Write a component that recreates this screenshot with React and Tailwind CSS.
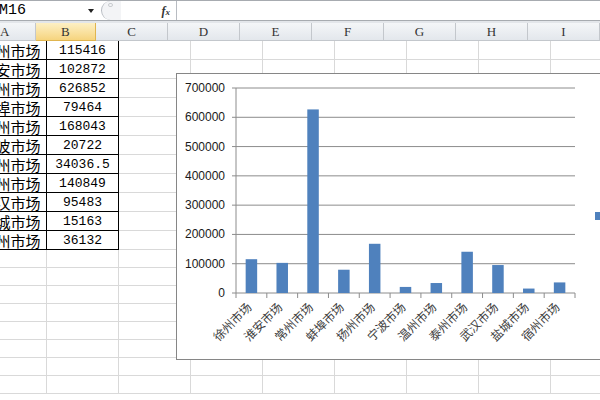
import React from "react";

const data = [
  ["徐州市场", 115416, "115416"],
  ["淮安市场", 102872, "102872"],
  ["常州市场", 626852, "626852"],
  ["蚌埠市场", 79464, "79464"],
  ["扬州市场", 168043, "168043"],
  ["宁波市场", 20722, "20722"],
  ["温州市场", 34036.5, "34036.5"],
  ["泰州市场", 140849, "140849"],
  ["武汉市场", 95483, "95483"],
  ["盐城市场", 15163, "15163"],
  ["宿州市场", 36132, "36132"],
];

const cols = ["C", "D", "E", "F", "G", "H", "I"];

function Chart() {
  const x0 = 59;
  const x1 = 398;
  const y0 = 219;
  const yTop = 14;
  const step = (y0 - yTop) / 7;
  const cw = (x1 - x0) / 11;
  const ticks = [0, 1, 2, 3, 4, 5, 6, 7];
  return (
    <svg width="440" height="285" className="block">
      {ticks.map((t) => {
        const y = y0 - t * step;
        return (
          <g key={t}>
            {t > 0 && <line x1={x0} x2={x1} y1={y} y2={y} stroke="#8c8c8c" strokeWidth="1" />}
            <line x1={x0 - 4} x2={x0} y1={y} y2={y} stroke="#8c8c8c" strokeWidth="1" />
            <text x="48" y={y + 4} textAnchor="end" fontSize="12" fill="#1a1a1a" className="font-['Liberation_Sans']">
              {t === 0 ? "0" : String(t * 100000)}
            </text>
          </g>
        );
      })}
      <line x1={x0} x2={x0} y1={yTop} y2={y0} stroke="#8c8c8c" strokeWidth="1" />
      <line x1={x0} x2={x1} y1={y0} y2={y0} stroke="#8c8c8c" strokeWidth="1" />
      {Array.from({ length: 12 }).map((_, i) => {
        const x = x0 + i * cw;
        return <line key={i} x1={x} x2={x} y1={y0} y2={y0 + 5} stroke="#8c8c8c" strokeWidth="1" />;
      })}
      {data.map(([name, v], i) => {
        const cx = x0 + (i + 0.5) * cw;
        const h = (v / 700000) * (y0 - yTop);
        return (
          <g key={name}>
            <rect x={cx - 5.75} y={y0 - h} width="11.5" height={h} fill="#4f81bd" />
            <text
              x={cx + 1}
              y={y0 + 15}
              textAnchor="end"
              fontSize="12"
              fill="#404040"
              transform={`rotate(-45 ${cx + 1} ${y0 + 15})`}
              className="font-['Noto_Sans_CJK_SC',sans-serif]"
            >
              {name}
            </text>
          </g>
        );
      })}
      <rect x="418" y="138" width="8" height="8" fill="#4f81bd" />
    </svg>
  );
}

export default function App() {
  const emptyRows = 8;
  return (
    <div className="relative w-[600px] h-[400px] overflow-hidden bg-white font-['Liberation_Sans',sans-serif]">
      {/* formula bar */}
      <div className="flex h-[21px] border-t border-b border-[#a7abb0] bg-white">
        <div className="relative w-[97px] flex items-center">
          <span className="text-[15px] leading-none text-black font-['Liberation_Mono',monospace] ml-[-1px]">M16</span>
          <span className="absolute left-[88px] top-[8px] w-0 h-0 border-l-[3px] border-r-[3px] border-t-[4px] border-l-transparent border-r-transparent border-t-[#222]"></span>
        </div>
        <div className="relative w-[80px] flex items-center border-r border-[#b8bcc2]">
          <div className="relative h-[19px] w-[20px] ml-[4px] rounded-l-full border-l border-[#b8bcc2] bg-[#f3f4f6]">
            <span className="absolute left-[6px] top-[2px] w-[5px] h-[4px] rounded-full border border-[#c9ccd0]"></span>
          </div>
          <span className="ml-auto mr-[6px] text-[12px] italic font-bold text-[#333] font-['Liberation_Serif',serif]">f<span className="text-[9px]">x</span></span>
        </div>
        <div className="flex-1"></div>
      </div>
      <div className="h-[2px] bg-[#e3e6ea]"></div>

      {/* grid */}
      <div className="flex flex-col">
        {/* header */}
        <div className="flex h-[18px] ml-[-25px]">
          <div className="w-[72px] flex items-center justify-center border-r border-b border-[#c3c7cc] bg-gradient-to-b from-[#f4f6f8] to-[#e3e7ec] text-[13px] text-[#333] font-['Liberation_Serif',serif]">A</div>
          <div className="w-[72px] flex items-center justify-center border-r border-b border-[#e0b54f] bg-gradient-to-b from-[#fdf0c4] to-[#f6d47e] text-[13px] text-[#333] font-['Liberation_Serif',serif]">B</div>
          {cols.map((c) => (
            <div key={c} className="w-[72px] shrink-0 flex items-center justify-center border-r border-b border-[#c3c7cc] bg-gradient-to-b from-[#f4f6f8] to-[#e3e7ec] text-[13px] text-[#333] font-['Liberation_Serif',serif]">
              {c}
            </div>
          ))}
        </div>
        {data.map(([name, , label]) => (
          <div key={name} className="flex h-[19px] ml-[-25px]">
            <div className="w-[72px] shrink-0 flex items-center justify-center border-r border-b border-black text-[15px] leading-none text-black font-['Noto_Sans_CJK_SC',sans-serif]">
              {name}
            </div>
            <div className="w-[72px] shrink-0 flex items-center justify-center border-r border-b border-black text-[13px] leading-none text-black font-['Liberation_Mono',monospace]">
              {label}
            </div>
            {cols.map((c) => (
              <div key={c} className="w-[72px] shrink-0 border-r border-b border-[#d9d9d9]"></div>
            ))}
          </div>
        ))}
        {Array.from({ length: emptyRows }).map((_, r) => (
          <div key={r} className="flex h-[18px] ml-[-25px]">
            <div className="w-[72px] shrink-0 border-r border-b border-[#d9d9d9]"></div>
            <div className="w-[72px] shrink-0 border-r border-b border-[#d9d9d9]"></div>
            {cols.map((c) => (
              <div key={c} className="w-[72px] shrink-0 border-r border-b border-[#d9d9d9]"></div>
            ))}
          </div>
        ))}
      </div>

      {/* chart object */}
      <div className="absolute left-[176px] top-[73px] w-[450px] h-[287px] border border-[#868686] bg-white">
        <Chart />
      </div>
    </div>
  );
}
